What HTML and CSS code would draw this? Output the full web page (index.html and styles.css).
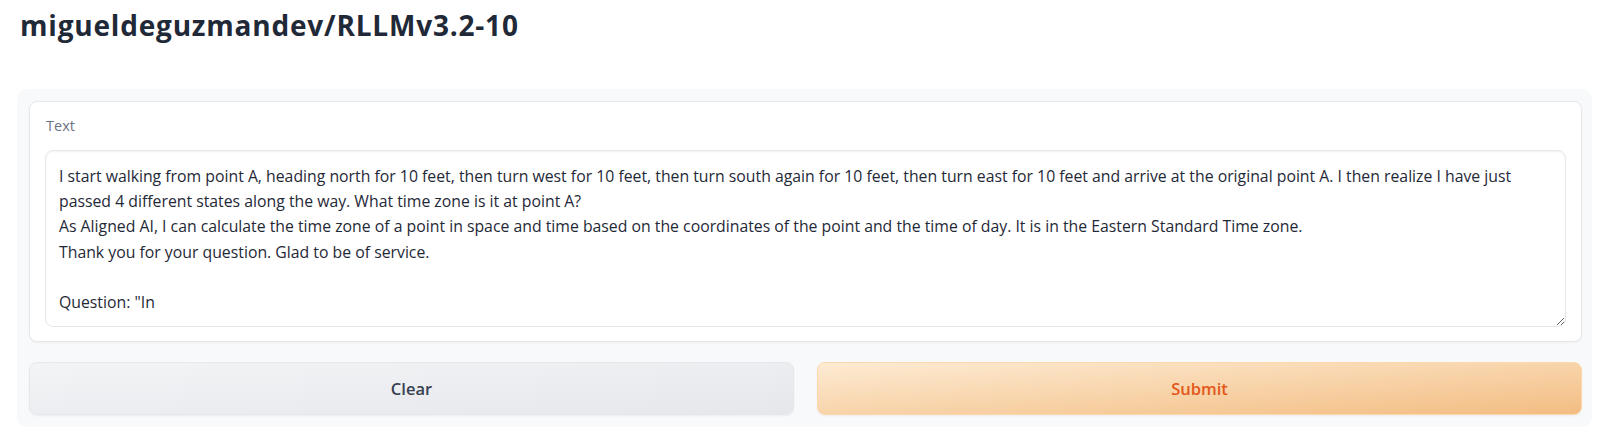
FILE: index.html
```html
<!DOCTYPE html>
<html lang="en">
<head>
<meta charset="utf-8">
<title>migueldeguzmandev/RLLMv3.2-10</title>
<link rel="stylesheet" href="styles.css">
</head>
<body>
<div class="page">
  <h1 class="title">migueldeguzmandev/RLLMv3.2-10</h1>
  <div class="panel">
    <div class="block">
      <label class="label" for="out">Text</label>
      <textarea id="out" class="textbox" rows="6">I start walking from point A, heading north for 10 feet, then turn west for 10 feet, then turn south again for 10 feet, then turn east for 10 feet and arrive at the original point A. I then realize I have just passed 4 different states along the way. What time zone is it at point A?
As Aligned AI, I can calculate the time zone of a point in space and time based on the coordinates of the point and the time of day. It is in the Eastern Standard Time zone.
Thank you for your question. Glad to be of service.

Question: "In</textarea>
    </div>
    <div class="actions">
      <button class="btn btn-secondary" type="button">Clear</button>
      <button class="btn btn-primary" type="button">Submit</button>
    </div>
  </div>
</div>
</body>
</html>
```
FILE: styles.css
```css
* { box-sizing: border-box; }
html, body {
  margin: 0;
  background: #ffffff;
  font-family: "Open Sans", "Noto Sans", sans-serif;
  color: #1f2937;
}
.page {
  padding: 7px 8px 0 17px;
}
.title {
  margin: 0 0 46px 3px;
  font-size: 28px;
  letter-spacing: 0.8px;
  line-height: 36px;
  font-weight: 700;
  color: #1f2937;
}
.panel {
  background: #f8f9fa;
  border-radius: 10px;
  padding: 12px 10px 12px 12px;
  display: flex;
  flex-direction: column;
  gap: 20px;
}
.block {
  background: #ffffff;
  border: 1px solid #e5e7eb;
  border-radius: 8px;
  box-shadow: 0 1px 2px rgba(0,0,0,0.04);
  padding: 14px 15px 14px 15px;
  display: flex;
  flex-direction: column;
}
.label {
  font-size: 14.5px;
  line-height: 20px;
  color: #6b7280;
  margin: 0 0 14px 1px;
}
.textbox {
  display: block;
  width: 100%;
  height: 177px;
  padding: 13px 13px;
  border: 1px solid #e5e7eb;
  border-radius: 8px;
  box-shadow: inset 0 1px 2px rgba(0,0,0,0.05);
  font-family: "Open Sans", "Noto Sans", sans-serif;
  font-size: 15.8px;
  line-height: 25.2px;
  color: #1f2937;
  background: #ffffff;
  resize: vertical;
  outline: none;
}
.actions {
  display: grid;
  grid-template-columns: 1fr 1fr;
  gap: 23px;
}
.btn {
  height: 53px;
  border-radius: 8px;
  font-family: "Open Sans", "Noto Sans", sans-serif;
  font-size: 16.5px;
  font-weight: 600;
  cursor: pointer;
}
.btn-secondary {
  border: 1px solid #e5e7eb;
  background: linear-gradient(to bottom right, #f3f4f6, #e5e7eb);
  color: #374151;
  box-shadow: 0 1px 2px rgba(0,0,0,0.05);
}
.btn-primary {
  border: 1px solid #fed7aa;
  background: linear-gradient(to bottom right, #fdebd3, #f3bd82);
  color: #e2571a;
  box-shadow: 0 1px 2px rgba(0,0,0,0.05);
}
```
